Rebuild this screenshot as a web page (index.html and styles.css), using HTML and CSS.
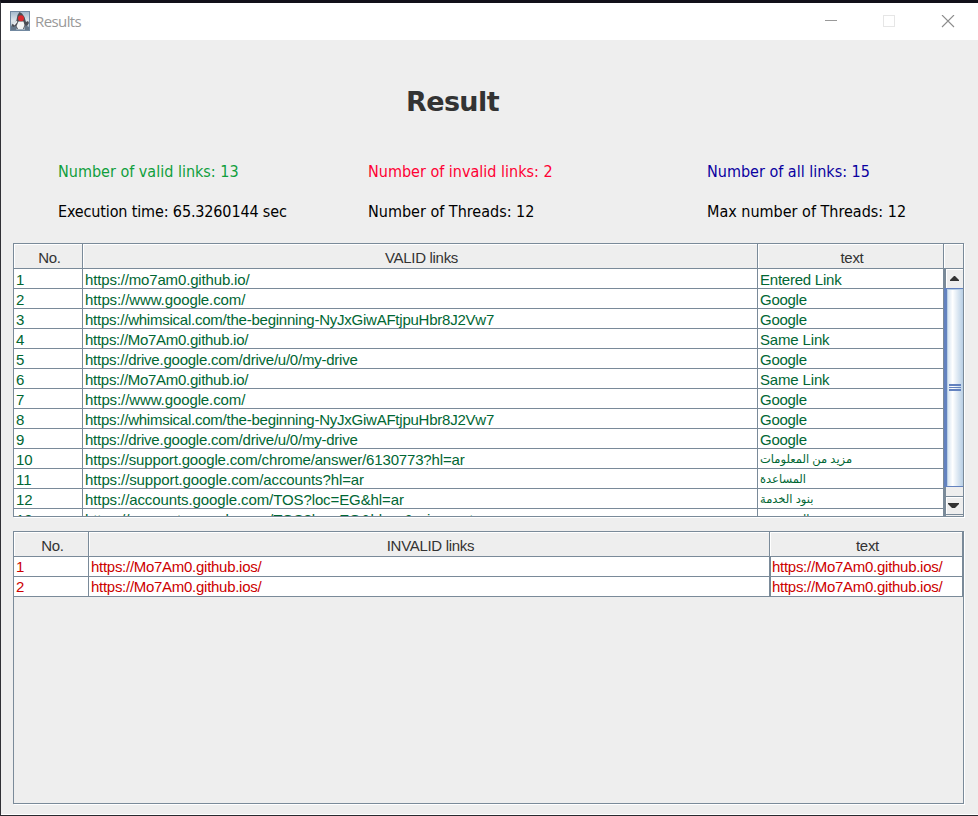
FILE: index.html
```html
<!DOCTYPE html>
<html lang="en">
<head>
<meta charset="utf-8">
<title>Results</title>
<link rel="stylesheet" href="styles.css">
</head>
<body>
<div class="window">
  <header class="titlebar">
    <svg class="app-icon" width="20" height="20" viewBox="0 0 20 20">
      <defs><linearGradient id="sky" x1="0" y1="0" x2="0" y2="1"><stop offset="0" stop-color="#a3b8cb"/><stop offset=".5" stop-color="#dfe6eb"/><stop offset="1" stop-color="#9aabba"/></linearGradient></defs>
      <rect x=".5" y=".5" width="19" height="19" fill="url(#sky)" stroke="#7188a0"/>
      <path d="M1 15L4 13L7 16L6 19H1zM15 14L19 16V19H15z" fill="#66788a"/>
      <path d="M9.500 1L12 2.500L14.500 6L16 11L18 10L19 12L17 15L15 14.500L14 18H7L6 15L3 16L1.500 14L5 11L6.500 9L7.500 4z" fill="#4a4d54"/>
      <path d="M8.500 10.500H13.500L14.500 14L13 18H8L6.500 15z" fill="#f4f5f5"/>
      <path d="M2.500 12.500L6.500 9.500L7.500 11L4.500 14.500z" fill="#e4e8eb"/>
      <circle cx="11" cy="7.300" r="3" fill="#dc2a2e"/>
    </svg>
    <span class="caption">Results</span>
    <svg class="controls" width="132" height="14" viewBox="0 0 132 14" fill="none">
      <path d="M0 5.500H12" stroke="#999"/>
      <rect x="58.500" y=".5" width="11" height="11" stroke="#e6e6e6"/>
      <path d="M117 0L129 12M129 0L117 12" stroke="#8c8c8c" stroke-width="1.100"/>
    </svg>
  </header>
  <main class="content">
    <h1>Result</h1>
    <section class="stats">
      <span class="green">Number of valid links: 13</span>
      <span class="red">Number of invalid links: 2</span>
      <span class="blue">Number of all links: 15</span>
      <span class="time">Execution time: 65.3260144 sec</span>
      <span>Number of Threads: 12</span>
      <span>Max number of Threads: 12</span>
    </section>
    <section class="pane valid">
      <div class="row head"><span>No.</span><span>VALID links</span><span>text</span><span class="corner"></span></div>
      <div class="view">
        <div class="rows">
          <div class="row"><span>1</span><span class="t2">https://mo7am0.github.io/</span><span class="t3">Entered Link</span></div>
          <div class="row"><span>2</span><span class="t1">https://www.google.com/</span><span class="t4">Google</span></div>
          <div class="row"><span>3</span><span class="t3">https://whimsical.com/the-beginning-NyJxGiwAFtjpuHbr8J2Vw7</span><span class="t4">Google</span></div>
          <div class="row"><span>4</span><span class="t4">https://Mo7Am0.github.io/</span><span class="t2">Same Link</span></div>
          <div class="row"><span>5</span><span class="t3">https://drive.google.com/drive/u/0/my-drive</span><span class="t4">Google</span></div>
          <div class="row"><span>6</span><span class="t4">https://Mo7Am0.github.io/</span><span class="t2">Same Link</span></div>
          <div class="row"><span>7</span><span class="t1">https://www.google.com/</span><span class="t4">Google</span></div>
          <div class="row"><span>8</span><span class="t3">https://whimsical.com/the-beginning-NyJxGiwAFtjpuHbr8J2Vw7</span><span class="t4">Google</span></div>
          <div class="row"><span>9</span><span class="t3">https://drive.google.com/drive/u/0/my-drive</span><span class="t4">Google</span></div>
          <div class="row"><span>10</span><span class="t2">https://support.google.com/chrome/answer/6130773?hl=ar</span><span class="ar">مزيد من المعلومات</span></div>
          <div class="row"><span>11</span><span class="t1">https://support.google.com/accounts?hl=ar</span><span class="ar">المساعدة</span></div>
          <div class="row"><span>12</span><span class="t1">https://accounts.google.com/TOS?loc=EG&amp;hl=ar</span><span class="ar">بنود الخدمة</span></div>
          <div class="row"><span>13</span><span class="t1">https://accounts.google.com/TOS?loc=EG&amp;hl=ar&amp;privacy=true</span><span class="ar">الخصوصية</span></div>
        </div>
        <div class="scrollbar">
          <div class="arrow up"><svg width="9" height="5" viewBox="0 0 9 5"><path d="M4 0H5L9 4V5H0V4z" fill="#333"/></svg></div>
          <div class="thumb"><i></i><i></i><i></i></div>
          <div class="arrow down"><svg width="11" height="5" viewBox="0 0 11 5"><path d="M0 0H11V1L7 5H4L0 1z" fill="#333"/></svg></div>
        </div>
      </div>
    </section>
    <section class="pane invalid">
      <div class="row head"><span>No.</span><span>INVALID links</span><span>text</span></div>
      <div class="row"><span>1</span><span class="t4">https://Mo7Am0.github.ios/</span><span class="t4">https://Mo7Am0.github.ios/</span></div>
      <div class="row"><span>2</span><span class="t4">https://Mo7Am0.github.ios/</span><span class="t4">https://Mo7Am0.github.ios/</span></div>
    </section>
  </main>
</div>
</body>
</html>
```
FILE: styles.css
```css
* { box-sizing: border-box; }
body { margin: 0; background: #eee; overflow: hidden; }
.window {
  width: 978px; height: 816px; display: flex; flex-direction: column;
  border-top: 3px solid #111019; border-left: 1px solid #303036; border-bottom: 1px solid #29292e;
  background: #eee;
}
.titlebar { height: 37px; background: #fff; display: flex; align-items: center; padding-left: 9px; flex: none; }
.app-icon { margin-top: -1px; }
.caption { margin: -2px 0 0 5px; font: 15px/20px "Open Sans", sans-serif; color: #999; letter-spacing: -.6px; }
.controls { margin: 0 21px 0 auto; }
.content { flex: 1; padding-left: 12px; border-bottom: 1px solid #fff; }
h1 { margin: 46px 0 0 393px; font: bold 27px/32px "DejaVu Sans", sans-serif; color: #333; height: 32px; letter-spacing: -.6px; }
.stats {
  display: grid; grid-template-columns: 310px 339px 1fr; grid-auto-rows: 40px;
  margin-top: 33px; padding-left: 45px; height: 92px;
  font: 16px/42px "DejaVu Sans Condensed", "DejaVu Sans", sans-serif; white-space: nowrap; color: #000;
}
.green { color: #109e3c; }
.red { color: #ff0033; }
.blue { color: #0a00a0; }
.time { letter-spacing: -.14px; }
.pane {
  width: 951px; border: 1px solid #7a8a99; box-shadow: 1px 1px #fff;
  font: 15px/20px "Liberation Sans", sans-serif; white-space: nowrap; overflow: hidden;
}
.row { display: grid; height: 20px; border-bottom: 1px solid #7a8a99; background: #fff; }
.row span { border-right: 1px solid #7a8a99; padding-left: 2px; line-height: 22px; height: 19px; overflow: hidden; }
.row .t1 { letter-spacing: -.1px; }
.row .t2 { letter-spacing: -.16px; }
.row .t3 { letter-spacing: -.235px; }
.row .t4 { letter-spacing: -.28px; }
.row.head { height: 25px; background: #eee; color: #333; }
.row.head span { text-align: center; padding: 0 0 0 3px; line-height: 27px; height: 24px; box-shadow: inset 1px 1px #fff; letter-spacing: -.3px; }
.valid { height: 274px; color: #006633; }
.valid .row { grid-template-columns: 69px 675px 186px 19px; }
.valid .head span:last-child { border-right: 0; }
.view { display: flex; height: 247px; }
.rows { width: 930px; overflow: hidden; }
.row .ar { font-family: "DejaVu Sans", sans-serif; font-size: 11.5px; line-height: 20px; letter-spacing: 0; word-spacing: -.5px; }
.scrollbar { width: 19px; display: flex; flex-direction: column; border-left: 2px solid #7a8a99; background: #eee; }
.arrow { height: 19px; display: flex; align-items: center; justify-content: center; flex: none; box-shadow: inset 1px 1px #fff; }
.up svg { margin-right: 1px; }
.down svg { margin-right: 2px; }
.thumb {
  height: 199px; margin-left: -2px; border: 1px solid #6382bf; border-left-width: 3px; border-right: 0;
  background: linear-gradient(90deg, #d0e0ef, #fff 35%, #b8cfe5);
  display: flex; flex-direction: column; align-items: center; justify-content: center; gap: 1px;
  box-shadow: inset 1px 1px #b8cfe5;
}
.thumb i { width: 12px; height: 2px; border-top: 1px solid #6382bf; border-bottom: 1px solid #6382bf; }
.thumb i:nth-child(2) { height: 1px; border-bottom: 0; }
.down { margin-top: 9px; border-top: 1px solid #7a8a99; border-bottom: 1px solid #7a8a99; }
.invalid { margin-top: 14px; height: 273px; color: #c00; }
.invalid .row { grid-template-columns: 75px 681px 193px; }
.invalid .row:not(.head) span { line-height: 20px; }
.invalid .row:not(.head) span:nth-child(3) { border-left: 1px solid #7a8a99; padding-left: 1px; }
```
